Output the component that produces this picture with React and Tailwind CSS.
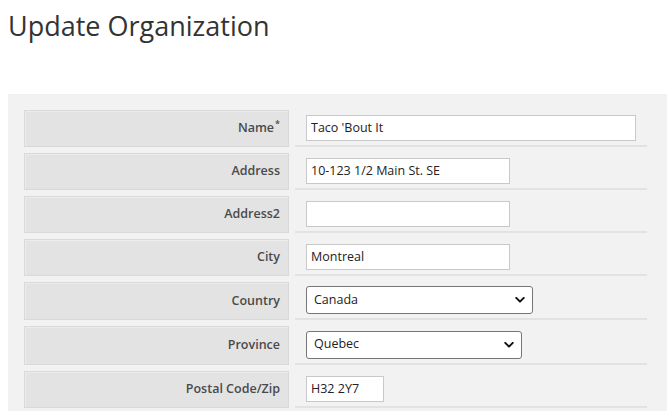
import React from "react";

const font = { fontFamily: '"Open Sans", "Liberation Sans", sans-serif' };

function Chevron() {
  return (
    <svg
      viewBox="0 0 12 8"
      className="pointer-events-none absolute right-[8px] top-1/2 h-[7px] w-[10px] -translate-y-1/2"
    >
      <path
        d="M1.5 1.5 L6 6 L10.5 1.5"
        fill="none"
        stroke="#111"
        strokeWidth="2.4"
        strokeLinecap="round"
        strokeLinejoin="round"
      />
    </svg>
  );
}

function Row({ label, required, height = "h-[37px]", children }) {
  return (
    <div className={`flex gap-[6px] ${height}`}>
      <div className="flex w-[265px] shrink-0 items-center justify-end border border-[#d9d9d9] bg-[#e3e3e3] pr-[8px] shadow-[inset_1px_1px_0_#ececec] text-[12.5px] font-semibold text-[#4a4a4a]">
        {label}
        {required && <sup className="ml-[1px] text-[9px] -top-[0.45em]">*</sup>}
      </div>
      <div className="flex w-[352px] items-center border-b-2 border-[#e2e2e2] pl-[11px]">
        {children}
      </div>
    </div>
  );
}

function TextInput({ value, width }) {
  return (
    <input
      type="text"
      defaultValue={value}
      className={`${width} h-[26px] border border-[#c9c9c9] bg-white px-[4px] text-[12.5px] text-[#222] outline-none`}
      style={font}
    />
  );
}

function SelectBox({ value, width }) {
  return (
    <div className={`relative ${width}`}>
      <select
        defaultValue={value}
        className="h-[28px] w-full appearance-none rounded-[3px] border border-[#767676] bg-white pl-[7px] text-[12.5px] text-[#222] outline-none"
        style={font}
      >
        <option>{value}</option>
      </select>
      <Chevron />
    </div>
  );
}

export default function App() {
  return (
    <div className="min-h-[416px] bg-white pl-[8px] text-[#333]" style={font}>
      <h1 className="pt-[8px] text-[27px] leading-[36px] text-[#333]">Update Organization</h1>
      <div className="mt-[50px] flex flex-col gap-[6px] bg-[#f2f2f2] pb-[3px] pl-[16px] pt-[16px]">
        <Row label="Name" required>
          <TextInput value="Taco 'Bout It" width="w-[330px]" />
        </Row>
        <Row label="Address">
          <TextInput value="10-123 1/2 Main St. SE" width="w-[204px]" />
        </Row>
        <Row label="Address2">
          <TextInput value="" width="w-[204px]" />
        </Row>
        <Row label="City">
          <TextInput value="Montreal" width="w-[204px]" />
        </Row>
        <Row label="Country" height="h-[38px]">
          <SelectBox value="Canada" width="w-[227px]" />
        </Row>
        <Row label="Province" height="h-[39px]">
          <SelectBox value="Quebec" width="w-[216px]" />
        </Row>
        <Row label="Postal Code/Zip">
          <TextInput value="H32 2Y7" width="w-[78px]" />
        </Row>
      </div>
    </div>
  );
}
